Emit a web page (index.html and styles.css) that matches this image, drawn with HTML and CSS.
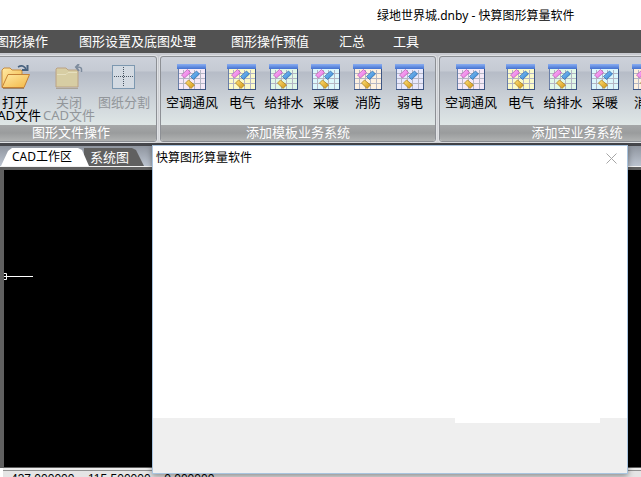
FILE: index.html
```html
<!DOCTYPE html>
<html lang="zh-CN">
<head>
<meta charset="utf-8">
<title>绿地世界城.dnby - 快算图形算量软件</title>
<link rel="stylesheet" href="styles.css">
</head>
<body>
<svg class="defs" aria-hidden="true">
  <defs>
    <linearGradient id="head" x2="0" y2="1"><stop stop-color="#8aaef2"/><stop offset="1" stop-color="#4472d0"/></linearGradient>
    <linearGradient id="pink" x2="1" y2="1"><stop stop-color="#fbb8fa"/><stop offset="1" stop-color="#ea70df"/></linearGradient>
    <linearGradient id="blue" x2="1" y2="1"><stop stop-color="#8ccbfa"/><stop offset="1" stop-color="#2c7cd0"/></linearGradient>
    <linearGradient id="gold" x2="1" y2="1"><stop stop-color="#ffe078"/><stop offset="1" stop-color="#cf9412"/></linearGradient>
    <linearGradient id="folder" x2="1" y2="1"><stop stop-color="#ffeaa5"/><stop offset="1" stop-color="#f3b744"/></linearGradient>
    <symbol id="table" viewBox="0 0 30 26">
      <rect x="1" y="1" width="28" height="25" fill="#8a96a8"/>
      <rect x="1" y="5" width="27" height="20" fill="currentColor"/>
      <path d="M6.500 6v19M12.500 6v19M17.500 6v19M23.500 6v19M1 9.500h27M1 14.500h27M1 19.500h27" stroke="#b4b6c4" fill="none"/>
      <path d="M1.500 5v20.500h27V5" stroke="#6a7fa8" fill="none"/>
      <rect x="0" y="0" width="29" height="5" fill="url(#head)"/>
      <path d="M1 25.500h28M28.500 5v21" stroke="#3d5684"/>
      <path d="M4.500 11l6-5.500 3 3-6 5.500z" fill="url(#pink)" stroke="#b657ae" stroke-width=".7"/>
      <path d="M13.500 12.500l6-5.500 3 3-6 5.500z" fill="url(#blue)" stroke="#2767a8" stroke-width=".7"/>
      <path d="M8.500 19l3-3 6 5-3.500 3.500z" fill="url(#gold)" stroke="#a8780e" stroke-width=".7"/>
    </symbol>
    <symbol id="open" viewBox="0 0 30 26">
      <path d="M2 23V6l2-2h6l2 2h9l1 1v4" fill="url(#folder)" stroke="#c78a3c"/>
      <path d="M2 23.500L8 10.500h21.500L24 23.500z" fill="url(#folder)" stroke="#c48136"/>
      <path d="M3 24.500h21" stroke="#9b8770"/>
      <path d="M18 3q5-3 8 2" fill="none" stroke="#48627f" stroke-width="1.500"/>
      <path d="M22 6h5.500V1" fill="none" stroke="#48627f" stroke-width="2"/>
    </symbol>
    <symbol id="close" viewBox="0 0 30 26">
      <path d="M2 23V5l1-1h9l2 2h9l1 1v16z" fill="#d7cda3" stroke="#bba284"/>
      <path d="M3 10.500h9l2-2h9" fill="none" stroke="#e6dfbe"/>
      <path d="M2 24.500h22" stroke="#a9a399"/>
      <path d="M27.500 8V5q0-2-5-2" fill="none" stroke="#7d8b9d" stroke-width="1.500"/>
      <path d="M25 0l-3 3 3 4" fill="none" stroke="#7d8b9d" stroke-width="2"/>
    </symbol>
    <symbol id="split" viewBox="0 0 30 26">
      <rect x="3.500" y="1.500" width="22" height="23" fill="#d3dae2" stroke="#7d98b0"/>
      <path d="M14.500 3v20M5 12.500h20" stroke="#485563" stroke-dasharray="1 1"/>
    </symbol>
  </defs>
</svg>
<div class="app">
  <header class="titlebar">绿地世界城.dnby - 快算图形算量软件</header>
  <nav class="menu">
    <button>图形操作</button><button>图形设置及底图处理</button><button>图形操作预值</button><button>汇总</button><button>工具</button>
  </nav>
  <div class="ribbon">
    <section class="panel files">
      <div class="tools">
        <button><svg><use href="#open"/></svg><span>打开</span><span>CAD文件</span></button>
        <button disabled><svg><use href="#close"/></svg><span>关闭</span><span>CAD文件</span></button>
        <button disabled><svg><use href="#split"/></svg><span>图纸分割</span></button>
      </div>
      <h2>图形文件操作</h2>
    </section>
    <section class="panel systems">
      <div class="tools">
        <button><svg class="lilac"><use href="#table"/></svg>空调通风</button>
        <button><svg class="yellow"><use href="#table"/></svg>电气</button>
        <button><svg class="green"><use href="#table"/></svg>给排水</button>
        <button><svg class="cyan"><use href="#table"/></svg>采暖</button>
        <button><svg class="peach"><use href="#table"/></svg>消防</button>
        <button><svg class="violet"><use href="#table"/></svg>弱电</button>
      </div>
      <h2>添加模板业务系统</h2>
    </section>
    <section class="panel systems">
      <div class="tools">
        <button><svg class="lilac"><use href="#table"/></svg>空调通风</button>
        <button><svg class="yellow"><use href="#table"/></svg>电气</button>
        <button><svg class="green"><use href="#table"/></svg>给排水</button>
        <button><svg class="cyan"><use href="#table"/></svg>采暖</button>
        <button><svg class="peach"><use href="#table"/></svg>消防</button>
        <button><svg class="violet"><use href="#table"/></svg>弱电</button>
      </div>
      <h2>添加空业务系统</h2>
    </section>
  </div>
  <div class="tabs">
    <button class="tab active">CAD工作区</button>
    <button class="tab">系统图</button>
  </div>
  <main class="canvas">
    <svg class="cursor" viewBox="0 0 30 7" aria-hidden="true"><path d="M0 .5h2.500v6H0M0 3.500h29" fill="none" stroke="#fff"/></svg>
  </main>
  <footer class="status"><span>437.000000 ,</span><span>115.500000 ,</span><span>0.000000</span></footer>
</div>
<div class="dialog" role="dialog" aria-labelledby="dialog-title">
  <div class="dialog-head">
    <span id="dialog-title">快算图形算量软件</span>
    <button aria-label="关闭"><svg viewBox="0 0 11 11"><path d="M.5.5l10 10M10.500.5l-10 10" stroke="#a6a6a6" fill="none"/></svg></button>
  </div>
  <div class="dialog-body"></div>
  <div class="dialog-foot"><div class="blank"></div></div>
</div>
</body>
</html>
```
FILE: styles.css
```css
* { box-sizing: border-box; }
body {
  margin: 0;
  overflow: hidden;
  font: 13px/14px "Noto Sans", "Noto Sans CJK SC", sans-serif;
  color: #000;
}
button {
  margin: 0;
  padding: 0;
  border: 0;
  background: none;
  font: inherit;
  color: inherit;
  white-space: nowrap;
}
.defs { position: absolute; width: 0; height: 0; }
.app { display: flex; flex-direction: column; height: 100vh; overflow: hidden; }

.titlebar {
  flex: none;
  height: 30px;
  padding-left: 377px;
  font-size: 12px;
  line-height: 32px;
  white-space: nowrap;
  background: #fff;
}
.menu {
  flex: none;
  display: grid;
  grid-template-columns: 83px 152px 108px 54px auto;
  height: 23px;
  margin-left: -4px;
  background: #525252;
  color: #fff;
}
.menu button { text-align: left; line-height: 23px; }

.ribbon {
  flex: none;
  display: flex;
  gap: 3px;
  height: 93px;
  padding: 3px 0 4px;
  background: linear-gradient(#c8cad0, #d5d7da 90px, #45464b 90px);
}
.panel {
  flex: none;
  display: flex;
  flex-direction: column;
  border: 1px solid #8d9095;
  border-radius: 3px;
  box-shadow: 0 0 0 1px #dfe1e4;
  overflow: hidden;
  background: linear-gradient(#cdd1da, #c5cad3 14px, #b6bcc7 15px, #ccd2d8 42px, #e0e8e7 70px);
}
.files { width: 172px; margin-left: -15px; }
.systems { width: 276px; }
.tools { flex: 1; display: grid; align-items: start; padding: 7px 2px 0; }
.files .tools { grid-template-columns: 54px 54px 56px; }
.systems .tools { grid-template-columns: 58px repeat(5, 42px); }
.tools button {
  display: flex;
  flex-direction: column;
  align-items: center;
  line-height: 13px;
}
.tools button:disabled { color: #92969a; }
.tools svg { width: 30px; height: 26px; margin-bottom: 6px; }
.lilac { color: #f5e9f7; }
.yellow { color: #fbfac9; }
.green { color: #e1f8e7; }
.cyan { color: #dcf7fc; }
.peach { color: #fdf0df; }
.violet { color: #e7e8fc; }
.panel h2 {
  flex: none;
  margin: 0;
  height: 16px;
  font: inherit;
  line-height: 14px;
  text-align: center;
  color: #fff;
  background: linear-gradient(#a5a7a8, #9a9c9d 8px, #b0b2b2);
}

.tabs {
  flex: none;
  display: flex;
  height: 21px;
  padding: 2px 0 0 1px;
  background: linear-gradient(#8f959f, #bcc4d0);
  border-bottom: 1px solid #f2f2f2;
}
.tab {
  width: 62px;
  margin-left: -6px;
  padding-left: 6px;
  text-align: left;
  line-height: 16px;
  color: #fff;
  background: #606060;
  clip-path: polygon(0 0, 48px 0, 52px 2px, 60px 100%, 0 100%);
}
.tab.active {
  z-index: 1;
  width: 89px;
  margin-left: 0;
  padding-left: 11px;
  font-size: 12px;
  color: #000;
  background: #fff;
  clip-path: polygon(0 100%, 7px 3px, 11px 0, 77px 0, 81px 2px, 88px 100%);
}
.canvas {
  flex: 1;
  background: #000;
  border: solid #606060;
  border-width: 3px 0 1px 4px;
}
.cursor { display: block; width: 30px; height: 7px; margin-top: 103px; }
.status {
  flex: none;
  display: flex;
  gap: 7px;
  height: 9px;
  margin-left: 3px;
  padding: 2px 0 0 8px;
  border-top: 2px solid #eee;
  background: linear-gradient(#909090 1px, #e5e5e5 1px);
  font: 12px/14px "Liberation Sans", sans-serif;
  white-space: nowrap;
}

.dialog {
  position: absolute;
  top: 145px;
  bottom: 3px;
  left: 152px;
  right: 13px;
  display: flex;
  flex-direction: column;
  border: 1px solid #a9c4df;
  background: #fff;
  box-shadow: 0 2px 6px rgba(0, 0, 0, .4);
}
.dialog-head {
  display: flex;
  align-items: center;
  justify-content: space-between;
  height: 24px;
  padding: 0 10px 0 3px;
  font-size: 12px;
}
.dialog-head svg { display: block; width: 11px; height: 11px; }
.dialog-body { flex: 1; }
.dialog-foot {
  display: flex;
  justify-content: flex-end;
  height: 55px;
  padding-right: 27px;
  background: #efefef;
}
.blank { width: 145px; height: 5px; background: #fff; }
```
